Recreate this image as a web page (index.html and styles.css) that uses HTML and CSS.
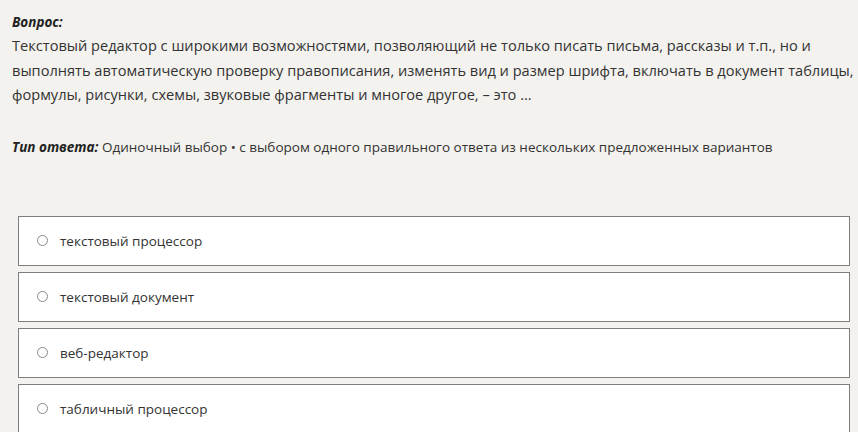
FILE: index.html
```
<!DOCTYPE html>
<html lang="ru">
<head>
<meta charset="utf-8">
<link rel="stylesheet" href="styles.css">
</head>
<body>
<div class="page">
  <div class="question">
    <div class="label">Вопрос:</div>
    <div class="text">Текстовый редактор с широкими возможностями, позволяющий не только писать письма, рассказы и т.п., но и выполнять автоматическую проверку правописания, изменять вид и размер шрифта, включать в документ таблицы, формулы, рисунки, схемы, звуковые фрагменты и многое другое, – это …</div>
  </div>
  <div class="type"><span class="label">Тип ответа:</span> Одиночный выбор • с выбором одного правильного ответа из нескольких предложенных вариантов</div>
  <div class="options">
    <div class="option"><span class="radio"></span><span>текстовый процессор</span></div>
    <div class="option"><span class="radio"></span><span>текстовый документ</span></div>
    <div class="option"><span class="radio"></span><span>веб-редактор</span></div>
    <div class="option"><span class="radio"></span><span>табличный процессор</span></div>
  </div>
</div>
</body>
</html>
```
FILE: styles.css
```
html, body { margin: 0; padding: 0; }
body {
  background: #f3f2ef;
  font-family: "Open Sans", "Noto Sans", sans-serif;
  color: #333;
}
.page { padding: 11px 0 0 12px; }
.question { font-size: 14.6px; line-height: 24.5px; }
.label { font-weight: 700; font-style: italic; color: #222; }
.question .label { font-size: 13.5px; line-height: 22px; }
.type { font-size: 13.5px; margin-top: 31px; }
.options { margin: 60px 0 0 6px; display: flex; flex-direction: column; gap: 6px; width: 832px; }
.option {
  box-sizing: border-box;
  background: #fff;
  border: 1.5px solid #7f7f7f;
  height: 50px;
  display: flex; align-items: center;
  padding-left: 18px;
  font-size: 13.5px;
  gap: 12px;
}
.radio { width: 11px; height: 11px; border: 1px solid #8a8a8a; border-radius: 50%; box-sizing: border-box; flex: none; }
```
